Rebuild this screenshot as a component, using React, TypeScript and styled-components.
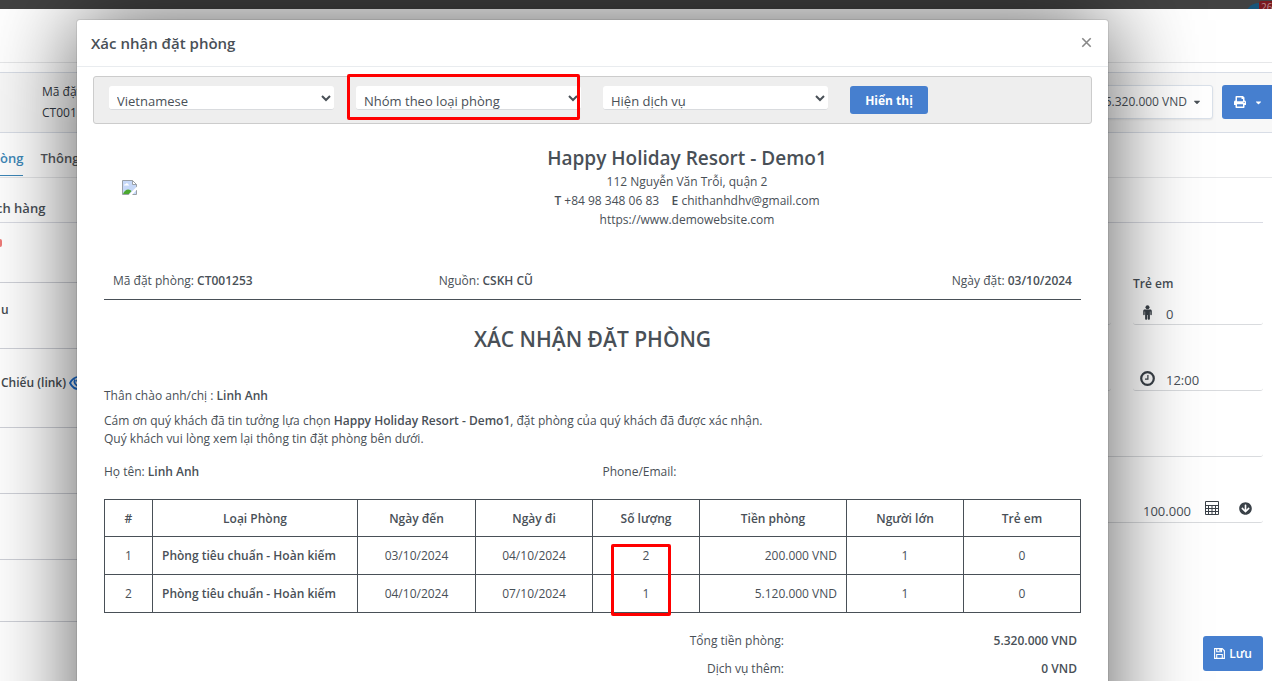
import React from "react";
import styled, { createGlobalStyle } from "styled-components";
import { FaPrint, FaCaretDown, FaArrowCircleDown } from "react-icons/fa";

const ink = "#495057";
const blue = "#467fcf";

const GlobalStyle = createGlobalStyle`
  *, *::before, *::after { box-sizing: border-box; }
  body {
    margin: 0;
    background: #fff;
    color: ${ink};
    font-family: "Open Sans", "Noto Sans", sans-serif;
    font-size: 12px;
    line-height: 18px;
  }
  button, input, select { font: inherit; color: inherit; margin: 0; }
  h1, h2, h3, p { margin: 0; font: inherit; }
  b, strong { font-weight: 600; }
`;

const Screen = styled.div`
  position: relative;
  height: 100vh;
  overflow: hidden;
`;

const TopBar = styled.header`
  height: 9px;
  background: #424242;
  display: flex;
  justify-content: flex-end;
  overflow: hidden;
`;
const Avatar = styled.span`
  width: 28px;
  height: 28px;
  margin: 3px 0 0;
  border-radius: 50%;
  background: #17567a;
  flex: none;
`;
const Count = styled.span`
  width: 18px;
  height: 16px;
  margin: 1px -5px 0 -14px;
  border-radius: 2px;
  background: #7a1a1f;
  color: #b98f90;
  font-size: 10px;
  line-height: 12px;
  padding-left: 2px;
  flex: none;
`;
const TitleStrip = styled.div`
  height: 54px;
  border-bottom: 1px solid #e6e7e9;
`;
const Summary = styled.section`
  margin-top: 9px;
  height: 61px;
  border: 1px solid #d8dde6;
  border-width: 1px 0;
  background: #f8f8f8;
  display: flex;
  justify-content: space-between;
  padding: 8px 0 0 42px;
`;
const Code = styled.div`
  line-height: 21px;
  color: #333a45;
`;
const Actions = styled.div`
  display: flex;
  gap: 9px;
  padding-top: 4px;
`;
const PriceButton = styled.button`
  height: 34px;
  width: 140px;
  border: 1px solid #dae1ea;
  border-radius: 3px;
  background: #fff;
  box-shadow: 0 1px 2px rgba(0, 0, 0, 0.08);
  padding: 0 10px;
  display: flex;
  align-items: center;
  justify-content: flex-end;
  gap: 5px;
`;
const PrintButton = styled.button`
  height: 34px;
  width: 50px;
  border: 0;
  border-radius: 3px 0 0 3px;
  background: ${blue};
  color: #fff;
  padding: 0 9px 0 12px;
  display: flex;
  align-items: center;
  justify-content: space-between;
`;
const Tabs = styled.nav`
  height: 45px;
  border-bottom: 1px solid #e6e7e9;
  display: flex;
  gap: 17px;
`;
const Tab = styled.a<{ $on?: boolean }>`
  height: 43px;
  padding-top: 16px;
  font-size: 13px;
  font-weight: 600;
  text-decoration: none;
  color: ${(p) => (p.$on ? "#3d87b8" : "#55595e")};
  border-bottom: 1px solid ${(p) => (p.$on ? "#3d87b8" : "transparent")};
`;
const Section = styled.h2`
  height: 45px;
  margin-right: 9px;
  padding-top: 21px;
  text-indent: -4px;
  font-size: 13px;
  font-weight: 600;
  border-bottom: 1px solid #d9dbe3;
`;
const Columns = styled.div`
  display: flex;
  padding-right: 9px;
`;
const Left = styled.div`
  flex: 0 0 110px;
`;
const LeftRow = styled.div<{ $h: number }>`
  height: ${(p) => p.$h}px;
  padding: 0 0 11px 1px;
  border-bottom: 1px solid #cfd1d8;
  display: flex;
  align-items: center;
  gap: 3px;
  font-weight: 600;
  color: #444a50;
  white-space: nowrap;
`;
const Dot = styled.span`
  width: 2px;
  height: 8px;
  margin: 0 0 8px -1px;
  border-radius: 0 4px 4px 0;
  background: #ee7b78;
`;
const Right = styled.div`
  flex: 1;
`;
const FieldRow = styled.div<{ $split?: boolean }>`
  display: grid;
  grid-template-columns: ${(p) => (p.$split ? "1fr 130px" : "1fr")};
  gap: 22px;
`;
const Field = styled.label<{ $h?: number; $end?: boolean }>`
  height: ${(p) => p.$h ?? 66}px;
  border-bottom: 1px solid #d9dbde;
  border-radius: 3px;
  display: flex;
  flex-direction: column;
  justify-content: flex-end;
  align-items: ${(p) => (p.$end ? "flex-end" : "stretch")};
  gap: 7px;
  font-weight: 600;
`;
const FieldLine = styled.span<{ $wide?: boolean }>`
  display: flex;
  align-items: center;
  gap: ${(p) => (p.$wide ? "20px" : "11px")};
  height: 24px;
  padding: ${(p) => (p.$wide ? "0 11px 4px 0" : "0 0 0 7px")};
  svg { flex: none; color: #3a4148; }
`;
const Plain = styled.input`
  border: 0;
  padding: 3px 0 0;
  background: transparent;
  width: 80px;
  height: 24px;
  font-size: 13px;
  font-weight: 400;
`;
const Amount = styled(Plain)`
  width: 48px;
  padding-top: 6px;
  margin-right: -6px;
`;
const SaveButton = styled.button`
  position: absolute;
  right: 9px;
  bottom: 10px;
  width: 60px;
  height: 35px;
  border: 0;
  border-radius: 3px;
  background: ${blue};
  color: #fff;
  font-weight: 600;
  display: flex;
  align-items: center;
  justify-content: center;
  gap: 4px;
`;

const Overlay = styled.div`
  position: absolute;
  inset: 0;
  padding: 20px 164px 0 77px;
`;
const Modal = styled.div`
  min-height: calc(100% + 120px);
  background: #fff;
  border-radius: 3px 3px 0 0;
  box-shadow: 0 0 0 1px rgba(0, 0, 0, 0.08), 0 0 90px rgba(0, 0, 0, 0.66);
`;
const ModalHead = styled.div`
  height: 47px;
  border-bottom: 1px solid #e9ecef;
  padding: 0 16px 0 14px;
  display: flex;
  align-items: center;
  justify-content: space-between;
`;
const ModalTitle = styled.h1`
  font-size: 15px;
  font-weight: 600;
`;
const Close = styled.button`
  border: 0;
  padding: 0;
  margin-bottom: 2px;
  background: none;
  display: flex;
  color: #888;
`;
const ModalBody = styled.div`
  padding: 9px 16px;
`;
const Toolbar = styled.form`
  height: 48px;
  border: 1px solid #ccc;
  border-radius: 3px;
  background: #eee;
  padding: 9px 15px;
  display: grid;
  grid-template-columns: repeat(3, 225px) auto;
  justify-content: start;
  gap: 22px;
`;
const Picker = styled.div`
  position: relative;
`;
const Select = styled.select`
  display: block;
  width: 100%;
  height: 24px;
  border: 0;
  border-bottom: 1px solid #d9dbde;
  border-radius: 3px;
  background: #fff;
  padding: 5px 4px 0 4px;
  font-size: 13px;
`;
const Highlight = styled.span<{ $area: string }>`
  position: absolute;
  inset: ${(p) => p.$area};
  border: 3px solid #f00;
  border-radius: 2px;
  pointer-events: none;
`;
const ShowButton = styled.button`
  height: 28px;
  border: 0;
  border-radius: 3px;
  background: ${blue};
  color: #fff;
  font-weight: 700;
  width: 78px;
  padding: 1px 0 0;
`;
const Sheet = styled.article`
  padding: 0 11px;
`;
const Letterhead = styled.div`
  display: grid;
  grid-template-columns: 189px 1fr;
  padding-top: 22px;
  height: 139px;
`;
const Missing = styled.svg`
  margin: 34px 0 0 18px;
`;
const Hotel = styled.div`
  text-align: center;
  line-height: 19px;
`;
const HotelName = styled.h2`
  margin-bottom: 2px;
  font-size: 19px;
  line-height: 24px;
  font-weight: 600;
`;
const Meta = styled.div`
  display: grid;
  grid-template-columns: repeat(3, 1fr);
  padding: 9px 0;
  border-bottom: 1px solid ${ink};
  span { padding: 0 9px; }
  span:last-child { text-align: right; }
`;
const Heading = styled.h2`
  margin: 22px 0 31px;
  text-align: center;
  font-size: 21px;
  line-height: 34px;
  font-weight: 600;
`;
const Para = styled.p`
  margin-bottom: 7px;
`;
const Guest = styled.div`
  display: grid;
  grid-template-columns: 1fr 1fr;
  margin: 15px 0 18px;
  span:last-child { padding-left: 10px; }
`;
const Table = styled.table`
  width: 100%;
  border-collapse: collapse;
  table-layout: fixed;
  th, td {
    height: 38px;
    border: 1px solid ${ink};
    padding: 0 9px;
    text-align: center;
  }
  th { font-weight: 600; height: 37px; padding-top: 2px; }
`;
const NameCell = styled.td`
  && { text-align: left; }
  font-weight: 600;
  white-space: nowrap;
`;
const MoneyCell = styled.td`
  && { text-align: right; }
`;
const CountCell = styled.td`
  position: relative;
`;
const Totals = styled.dl`
  display: grid;
  grid-template-columns: 680px 1fr;
  row-gap: 10px;
  margin: 19px 4px 0 0;
  text-align: right;
  dt, dd { margin: 0; }
  dd { font-weight: 600; }
`;

const columns: [string, number][] = [
  ["#", 48],
  ["Loại Phòng", 205],
  ["Ngày đến", 118],
  ["Ngày đi", 117],
  ["Số lượng", 107],
  ["Tiền phòng", 147],
  ["Người lớn", 117],
  ["Trẻ em", 117],
];
const rooms = [
  ["03/10/2024", "04/10/2024", "2", "200.000 VND"],
  ["04/10/2024", "07/10/2024", "1", "5.120.000 VND"],
];

const CalcIcon = () => (
  <svg width="14" height="14" viewBox="0 0 14 14" fill="none" stroke="currentColor">
    <path d="M.5 .5h13v13H.5zM.5 4.500h13M.5 7.500h13M.5 10.500h13M3.500 4.500v9M7 4.500v9M10.500 4.500v9" />
  </svg>
);

const PersonIcon = () => (
  <svg width="15" height="15" viewBox="0 0 15 15" fill="currentColor">
    <circle cx="7.5" cy="2.200" r="2" />
    <path d="M4.700 4.600h5.600c.9 0 1.500.6 1.500 1.500v3.300c0 1-1.500 1-1.500 0V6.600H9.900V13.800c0 1.400-2.100 1.400-2.100 0V10h-.6v3.800c0 1.400-2.100 1.400-2.100 0V6.600h-.4v2.800c0 1-1.500 1-1.500 0V6.100c0-.9.6-1.500 1.500-1.500z" />
  </svg>
);

const ClockIcon = () => (
  <svg width="15" height="15" viewBox="0 0 15 15" fill="none" stroke="currentColor">
    <circle cx="7.5" cy="7.500" r="6.300" strokeWidth="2.200" />
    <path d="M7.900 4v4.200H5" strokeWidth="1.200" />
  </svg>
);

const EyeIcon = () => (
  <svg width="20" height="16" viewBox="0 0 20 16" fill="none" stroke="#1a6fd6" strokeWidth="1.800">
    <path d="M1 8c2-4 5.200-6.200 9-6.200S17 4 19 8c-2 4-5.200 6.200-9 6.200S3 12 1 8z" />
    <path d="M6 4.500a4.500 4.500 0 1 0 8 0M7.500 6.500A3 3 0 0 1 10 4.500" />
  </svg>
);

const SaveIcon = () => (
  <svg width="11" height="11" viewBox="0 0 11 11" fill="none" stroke="currentColor" strokeWidth="1.100">
    <path d="M.6 .6h7.600l2.200 2.200v7.600H.6zM2.700 10.400V6.500h5.600v3.900M2.700 .6v3.200h4.800V.6" />
    <path d="M5.300 1h1.600v2H5.300z" fill="currentColor" stroke="none" />
  </svg>
);

const BrokenImage = () => (
  <Missing width="15" height="15" viewBox="0 0 15 15" role="img" aria-label="Logo">
    <path d="M.5 .5h10l4 4v10H.5z" fill="#c6d8f8" stroke="#9aa0a6" />
    <path d="M10.5 .5v4h4z" fill="#fff" stroke="#9aa0a6" />
    <path d="M2 5.400c0-1 .9-1.400 1.500-1.200.4-1.300 2.400-1.200 2.600.2 1 0 1.200.6 1 1z" fill="#fff" />
    <path d="M1 14c1.200-3 3-4.600 5.200-4.600 1.500 0 2.600.8 3.300 1.700L7 14z" fill="#4ca82f" />
    <path d="M6.500 15l8.500-8.500v3L10 15z" fill="#fff" />
  </Missing>
);

export default function App() {
  return (
    <>
      <GlobalStyle />
      <Screen>
        <TopBar>
          <Avatar />
          <Count>26</Count>
        </TopBar>
        <TitleStrip />
        <Summary>
          <Code>
            Mã đặt
            <br />
            CT001253
          </Code>
          <Actions>
            <PriceButton type="button">
              5.320.000 VND <FaCaretDown size={10} />
            </PriceButton>
            <PrintButton type="button" aria-label="In">
              <FaPrint size={12} />
              <FaCaretDown size={9} />
            </PrintButton>
          </Actions>
        </Summary>
        <Tabs>
          <Tab href="#phong" $on>
            òng
          </Tab>
          <Tab href="#thong-tin">Thông</Tab>
        </Tabs>
        <Section>ch hàng</Section>
        <Columns>
          <Left>
            <LeftRow $h={60}>
              <Dot />
            </LeftRow>
            <LeftRow $h={66}>u</LeftRow>
            <LeftRow $h={79}>
              Chiếu (link) <EyeIcon />
            </LeftRow>
            <LeftRow $h={66} />
            <LeftRow $h={66} />
            <LeftRow $h={62} />
          </Left>
          <Right>
            <FieldRow $split>
              <Field $h={102} as="span" />
              <Field $h={102}>
                Trẻ em
                <FieldLine>
                  <PersonIcon />
                  <Plain defaultValue="0" />
                </FieldLine>
              </Field>
            </FieldRow>
            <FieldRow $split>
              <Field as="span" />
              <Field>
                <FieldLine>
                  <ClockIcon />
                  <Plain defaultValue="12:00" aria-label="Giờ" />
                </FieldLine>
              </Field>
            </FieldRow>
            <FieldRow>
              <Field as="span" />
            </FieldRow>
            <FieldRow>
              <Field $end>
                <FieldLine $wide>
                  <Amount defaultValue="100.000" aria-label="Số tiền" />
                  <CalcIcon />
                  <FaArrowCircleDown size={13} />
                </FieldLine>
              </Field>
            </FieldRow>
          </Right>
        </Columns>

        <Overlay>
          <Modal role="dialog" aria-labelledby="dialog-title">
            <ModalHead>
              <ModalTitle id="dialog-title">Xác nhận đặt phòng</ModalTitle>
              <Close type="button" aria-label="Đóng">
                <svg width="11" height="11" viewBox="0 0 11 11" stroke="currentColor" strokeWidth="1.600">
                  <path d="M1.300 1.300l8.400 8.400M9.700 1.300l-8.400 8.400" />
                </svg>
              </Close>
            </ModalHead>
            <ModalBody>
              <Toolbar>
                <Picker>
                  <Select aria-label="Ngôn ngữ">
                    <option>Vietnamese</option>
                  </Select>
                </Picker>
                <Picker>
                  <Select aria-label="Nhóm">
                    <option>Nhóm theo loại phòng</option>
                  </Select>
                  <Highlight $area="-12px 1px -6px -9px" />
                </Picker>
                <Picker>
                  <Select aria-label="Dịch vụ">
                    <option>Hiện dịch vụ</option>
                  </Select>
                </Picker>
                <ShowButton type="button">Hiển thị</ShowButton>
              </Toolbar>
              <Sheet>
                <Letterhead>
                  <BrokenImage />
                  <Hotel>
                    <HotelName>Happy Holiday Resort - Demo1</HotelName>
                    112 Nguyễn Văn Trỗi, quận 2<br />
                    <b>T</b> +84 98 348 06 83 &nbsp;&nbsp; <b>E</b> chithanhdhv@gmail.com
                    <br />
                    https://www.demowebsite.com
                  </Hotel>
                </Letterhead>
                <Meta>
                  <span>
                    Mã đặt phòng: <b>CT001253</b>
                  </span>
                  <span>
                    Nguồn: <b>CSKH CŨ</b>
                  </span>
                  <span>
                    Ngày đặt: <b>03/10/2024</b>
                  </span>
                </Meta>
                <Heading>XÁC NHẬN ĐẶT PHÒNG</Heading>
                <Para>
                  Thân chào anh/chị : <b>Linh Anh</b>
                </Para>
                <Para>
                  Cám ơn quý khách đã tin tưởng lựa chọn <b>Happy Holiday Resort - Demo1</b>, đặt phòng của quý
                  khách đã được xác nhận.
                  <br />
                  Quý khách vui lòng xem lại thông tin đặt phòng bên dưới.
                </Para>
                <Guest>
                  <span>
                    Họ tên: <b>Linh Anh</b>
                  </span>
                  <span>Phone/Email:</span>
                </Guest>
                <Table>
                  <colgroup>
                    {columns.map(([name, w]) => (
                      <col key={name} style={{ width: `${(w / 976) * 100}%` }} />
                    ))}
                  </colgroup>
                  <thead>
                    <tr>
                      {columns.map(([name]) => (
                        <th key={name}>{name}</th>
                      ))}
                    </tr>
                  </thead>
                  <tbody>
                    {rooms.map(([from, to, count, price], i) => (
                      <tr key={from}>
                        <td>{i + 1}</td>
                        <NameCell>Phòng tiêu chuẩn - Hoàn kiếm</NameCell>
                        <td>{from}</td>
                        <td>{to}</td>
                        <CountCell>
                          {count}
                          {i === 0 && <Highlight $area="7px 28px -42px 18px" />}
                        </CountCell>
                        <MoneyCell>{price}</MoneyCell>
                        <td>1</td>
                        <td>0</td>
                      </tr>
                    ))}
                  </tbody>
                </Table>
                <Totals>
                  <dt>Tổng tiền phòng:</dt>
                  <dd>5.320.000 VND</dd>
                  <dt>Dịch vụ thêm:</dt>
                  <dd>0 VND</dd>
                </Totals>
              </Sheet>
            </ModalBody>
          </Modal>
        </Overlay>
        <SaveButton type="button">
          <SaveIcon /> Lưu
        </SaveButton>
      </Screen>
    </>
  );
}
